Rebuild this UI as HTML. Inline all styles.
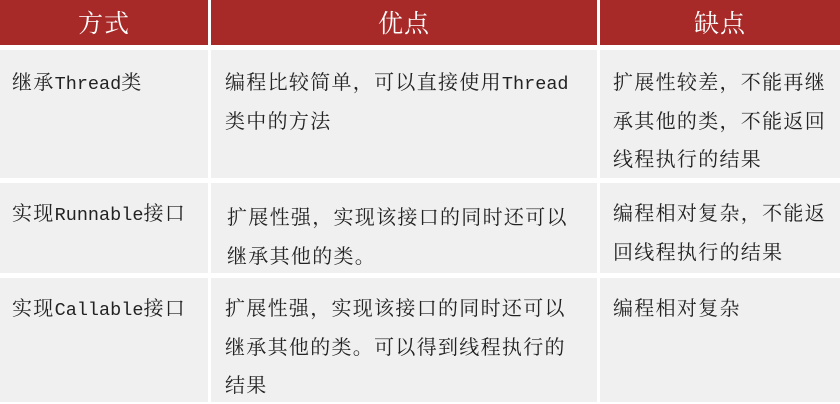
<!DOCTYPE html>
<html><head><meta charset="utf-8"><style>
body{margin:0;width:840px;height:402px;background:#fff;position:relative;overflow:hidden;font-family:"Liberation Serif","Noto Serif CJK SC",serif;}
.h{position:absolute;top:0;height:45px;background:#a82a28;color:#fff;font-size:25px;line-height:45px;text-align:center;font-family:"Noto Serif CJK SC","Noto Sans CJK SC",serif;letter-spacing:1px;}
.c{position:absolute;background:#f0f0f0;color:#222;font-size:20px;line-height:38.5px;font-family:"Noto Serif CJK SC","Noto Sans CJK SC",serif;box-sizing:border-box;padding-top:12px;letter-spacing:1.3px;white-space:nowrap;}
.m{font-family:"Liberation Mono",monospace;font-size:18.5px;letter-spacing:0;line-height:0;}
</style></head><body>
<div class="h" style="left:0;width:208px">方式</div>
<div class="h" style="left:211px;width:386px">优点</div>
<div class="h" style="left:600px;width:240px">缺点</div>

<div class="c" style="left:0;top:50px;width:208px;height:128px;padding-left:12px">继承<span class="m">Thread</span>类</div>
<div class="c" style="left:211px;top:50px;width:386px;height:128px;padding-left:14px">编程比较简单，可以直接使用<span class="m">Thread</span><br>类中的方法</div>
<div class="c" style="left:600px;top:50px;width:240px;height:128px;padding-left:13px">扩展性较差，不能再继<br>承其他的类，不能返回<br>线程执行的结果</div>

<div class="c" style="left:0;top:183px;width:208px;height:90px;padding-left:12px;padding-top:10px">实现<span class="m">Runnable</span>接口</div>
<div class="c" style="left:211px;top:183px;width:386px;height:90px;padding-left:16px;padding-top:14px">扩展性强，实现该接口的同时还可以<br>继承其他的类。</div>
<div class="c" style="left:600px;top:183px;width:240px;height:90px;padding-left:13px;padding-top:10px">编程相对复杂，不能返<br>回线程执行的结果</div>

<div class="c" style="left:0;top:278px;width:208px;height:124px;padding-left:12px;padding-top:10px">实现<span class="m">Callable</span>接口</div>
<div class="c" style="left:211px;top:278px;width:386px;height:124px;padding-left:14px;padding-top:10px">扩展性强，实现该接口的同时还可以<br>继承其他的类。可以得到线程执行的<br>结果</div>
<div class="c" style="left:600px;top:278px;width:240px;height:124px;padding-left:13px;padding-top:10px">编程相对复杂</div>
</body></html>
